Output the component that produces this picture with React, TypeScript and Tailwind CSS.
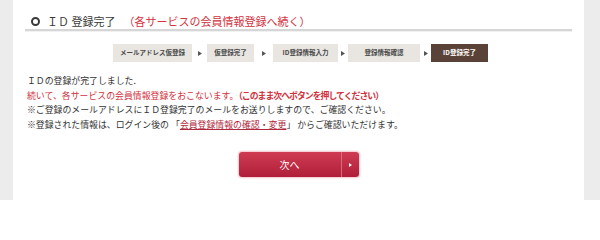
import React from "react";

const steps = [
  { label: "メールアドレス仮登録", w: "w-[79px]", gap: "w-[15px]" },
  { label: "仮登録完了", w: "w-[47px]", gap: "w-[19px]" },
  { label: "ID登録情報入力", w: "w-[65px]", gap: "w-[10px]" },
  { label: "登録情報確認", w: "w-[72px]", gap: "w-[11px]" },
];

export default function App() {
  return (
    <div
      className="flex h-[200px] w-[600px] overflow-hidden bg-[#ececec]"
      style={{ fontFamily: '"Noto Sans CJK JP", "Noto Sans", sans-serif' }}
    >
      <div className="w-[13px] shrink-0 bg-[#ececec]" />
      <div className="flex w-[571px] shrink-0 flex-col bg-white">
        {/* heading */}
        <div className="mx-[12px] mt-[14px] flex h-[17px] w-[547px] items-center border-b-2 border-[#d6d6d6] pb-[1px] shadow-[0_1px_0_#f1f1f1]">
          <span className="ml-[6px] inline-block h-[9px] w-[9px] rounded-full border-[2.5px] border-[#3a3a3a]" />
          <span className="ml-[7px] text-[11px] leading-none text-[#3a3a3a]">
            ＩＤ 登録完了
          </span>
          <span className="ml-[8px] text-[11px] leading-none text-[#d2323e]">
            （各サービスの会員情報登録へ続く）
          </span>
        </div>

        {/* steps */}
        <div className="mt-[13px] flex h-[18px] items-center pl-[100px]">
          {steps.map((s) => (
            <React.Fragment key={s.label}>
              <div
                className={`${s.w} flex h-[18px] items-center justify-center bg-[#e9e6e2] text-[6.5px] font-bold text-[#4a4a4a]`}
              >
                {s.label}
              </div>
              <div className={`${s.gap} flex items-center justify-center`}>
                <svg width="4" height="5" viewBox="0 0 4 5">
                  <path d="M0 0 L4 2.5 L0 5 Z" fill="#555" />
                </svg>
              </div>
            </React.Fragment>
          ))}
          <div className="flex h-[18px] w-[57px] items-center justify-center bg-[#5b4238] text-[6.5px] font-bold text-white">
            ID登録完了
          </div>
        </div>

        {/* text */}
        <div className="mt-[12px] pl-[14px] text-[8.9px] leading-[14.5px] text-[#333]">
          <p>ＩＤの登録が完了しました.</p>
          <p className="text-[#d2323e]">
            続いて、各サービスの会員情報登録をおこないます。
            <span className="font-bold tracking-[-1px]">（このまま次へボタンを押してください）</span>
          </p>
          <p>※ご登録のメールアドレスにＩＤ登録完了のメールをお送りしますので、ご確認ください。</p>
          <p>
            ※登録された情報は、ログイン後の 「
            <span className="text-[#b0283c] underline">会員登録情報の確認・変更</span>
            」 からご確認いただけます。
          </p>
        </div>

        {/* button */}
        <div className="mt-[20px] flex justify-center">
          <div className="flex h-[25px] w-[120px] overflow-hidden rounded-[3px] bg-gradient-to-b from-[#cf3b53] to-[#b01d39] shadow-[0_0_2px_1px_#f3c3cb]">
            <div className="flex flex-1 items-center justify-center text-[10px] text-white">
              次へ
            </div>
            <div className="w-px bg-[#d96a7c]" />
            <div className="flex w-[17px] items-center justify-center">
              <svg width="3" height="4" viewBox="0 0 3 4">
                <path d="M0 0 L3 2 L0 4 Z" fill="#fff" />
              </svg>
            </div>
          </div>
        </div>
      </div>
      <div className="flex-1 bg-[#ececec]" />
    </div>
  );
}
